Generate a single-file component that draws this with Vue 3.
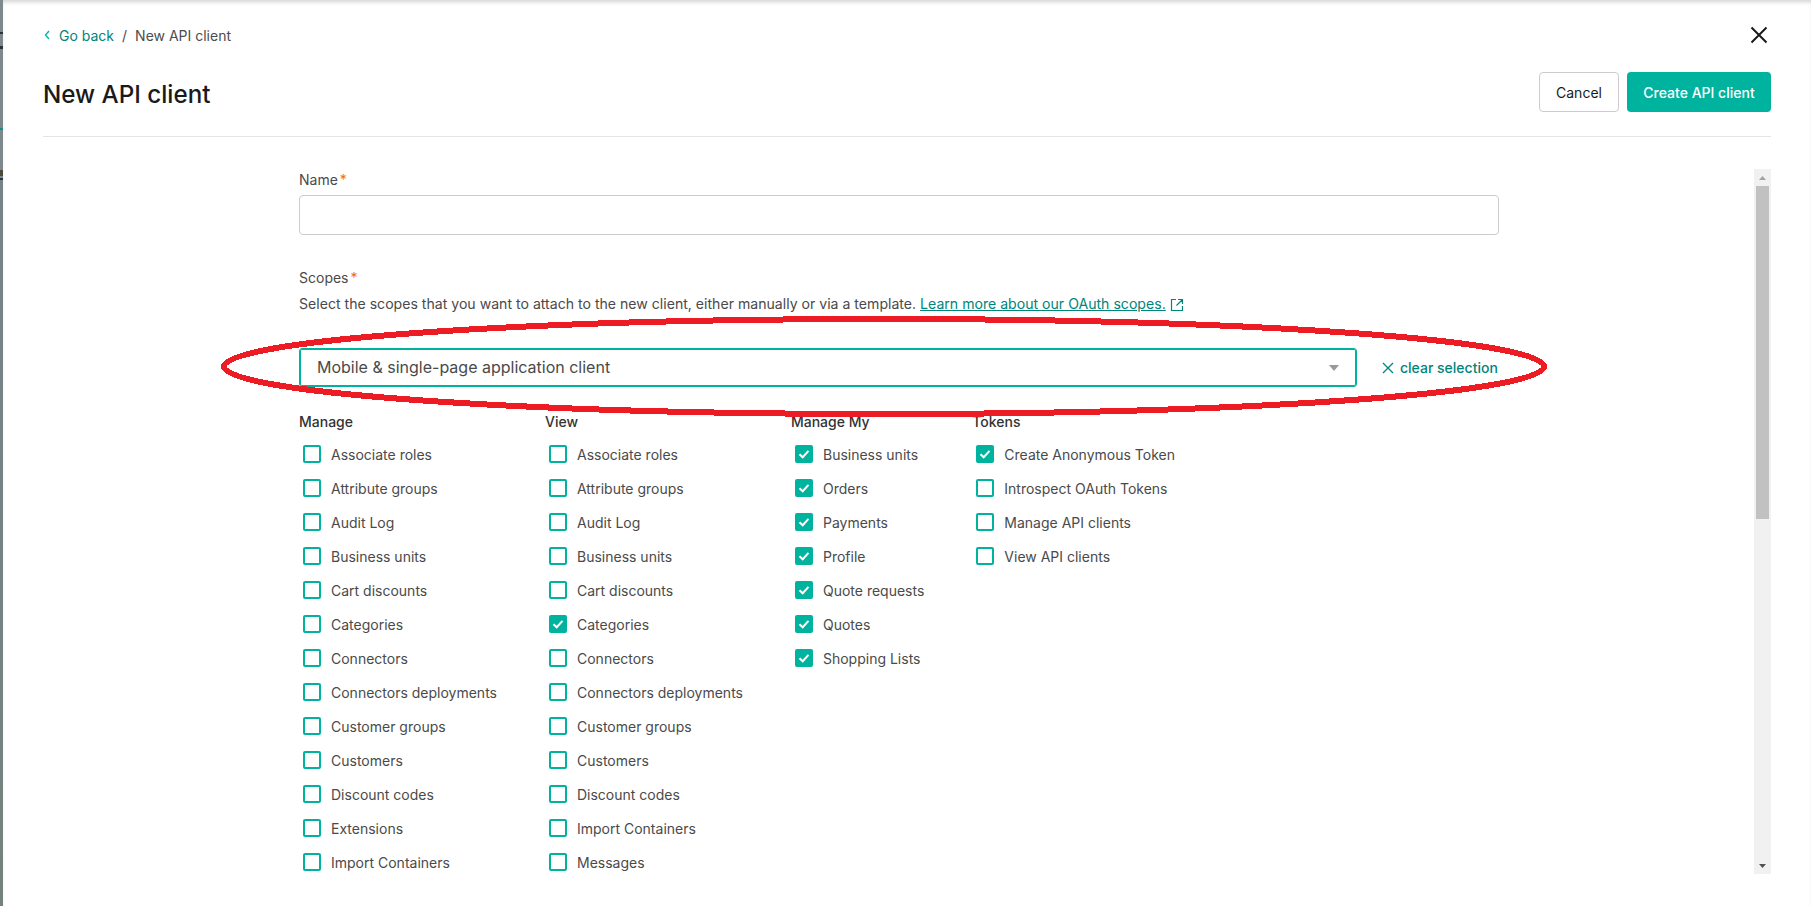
<script setup>
const manage = ['Associate roles', 'Attribute groups', 'Audit Log', 'Business units', 'Cart discounts', 'Categories', 'Connectors', 'Connectors deployments', 'Customer groups', 'Customers', 'Discount codes', 'Extensions', 'Import Containers']
const view = ['Associate roles', 'Attribute groups', 'Audit Log', 'Business units', 'Cart discounts', 'Categories', 'Connectors', 'Connectors deployments', 'Customer groups', 'Customers', 'Discount codes', 'Import Containers', 'Messages']
const manageMy = ['Business units', 'Orders', 'Payments', 'Profile', 'Quote requests', 'Quotes', 'Shopping Lists']
const tokens = ['Create Anonymous Token', 'Introspect OAuth Tokens', 'Manage API clients', 'View API clients']

const groups = [
  { title: 'Manage', items: manage, checked: [] },
  { title: 'View', items: view, checked: ['Categories'] },
  { title: 'Manage My', items: manageMy, checked: manageMy },
  { title: 'Tokens', items: tokens, checked: ['Create Anonymous Token'] },
]
</script>

<template>
  <div class="page">
    <div class="modal">
      <div class="crumbs">
        <a class="back">
          <svg width="8" height="12" viewBox="0 0 8 12"><path d="M6 2 2.5 6 6 10" fill="none" stroke="#00b39e" stroke-width="1.3"/></svg>
          Go back
        </a>
        <span class="slash">/</span>
        <span>New API client</span>
        <svg class="close" width="18" height="18" viewBox="0 0 18 18"><path d="M1.5 1.5 16.5 16.5M16.5 1.5 1.5 16.5" stroke="#1a1a1a" stroke-width="2" fill="none"/></svg>
      </div>
      <div class="head">
        <h1>New API client</h1>
        <div class="actions">
          <button class="btn cancel">Cancel</button>
          <button class="btn primary">Create API client</button>
        </div>
      </div>
      <div class="body">
        <div class="scroller">
          <div class="form">
            <div class="label">Name<span class="req">*</span></div>
            <div class="input"></div>

            <div class="label scopes">Scopes<span class="req">*</span></div>
            <p class="help">
              Select the scopes that you want to attach to the new client, either manually or via a template.
              <a class="link">Learn more about our OAuth scopes.</a>
              <svg class="ext" width="14" height="14" viewBox="0 0 14 14"><path d="M6 1.5H1.5v11h11V8M8 1.5h4.5V6M12.5 1.5 6.5 7.5" fill="none" stroke="#00857a" stroke-width="1.2"/></svg>
            </p>

            <div class="select-row">
              <div class="select">
                <span class="value">Mobile &amp; single-page application client</span>
                <i class="caret"></i>
              </div>
              <a class="clear">
                <svg width="14" height="14" viewBox="0 0 14 14"><path d="M2 2 12 12M12 2 2 12" stroke="#00857a" stroke-width="1.3" fill="none"/></svg>
                clear selection
              </a>
            </div>

            <div class="groups">
              <div v-for="g in groups" :key="g.title" class="group">
                <div class="group-title">{{ g.title }}</div>
                <label v-for="item in g.items" :key="item" class="row">
                  <span class="box" :class="{ on: g.checked.includes(item) }">
                    <svg v-if="g.checked.includes(item)" width="14" height="14" viewBox="0 0 14 14"><path d="M2.5 7.2 5.7 10.2 11.5 3.8" fill="none" stroke="#fff" stroke-width="2"/></svg>
                  </span>
                  {{ item }}
                </label>
              </div>
            </div>
          </div>
        </div>
        <div class="scrollbar">
          <div class="arrow"><svg width="7" height="4" viewBox="0 0 7 4"><path d="M3.5 0 7 4H0z" fill="#a3a3a3"/></svg></div>
          <div class="thumb"></div>
          <div class="arrow end"><svg width="7" height="4" viewBox="0 0 7 4"><path d="M0 0H7L3.5 4z" fill="#505050"/></svg></div>
        </div>
      </div>
    </div>
    <svg class="ring" width="1811" height="906" viewBox="0 0 1811 906">
      <ellipse cx="884" cy="366.5" rx="660" ry="47.5" fill="none" stroke="#ed1c24" stroke-width="6" shape-rendering="crispEdges"/>
    </svg>
  </div>
</template>

<style>
html, body { margin: 0; overflow: hidden; background: #fff; }
</style>

<style scoped>
.page {
  position: relative;
  width: 1811px;
  height: 906px;
  overflow: hidden;
  /* bits of the page behind the modal showing at the left edge */
  background: linear-gradient(
    to bottom,
    #7d898c 32px, #2b3336 32px, #2b3336 34px,
    #7d898c 34px, #7d898c 46px, #2b3336 46px, #2b3336 49px,
    #7d898c 49px, #7d898c 128px, #0f8f86 128px, #0f8f86 130px,
    #7d898c 130px, #7d898c 170px, #4b4a3c 170px, #4b4a3c 176px,
    #7d898c 176px, #7d898c 178px, #2b3336 178px, #2b3336 180px,
    #76838a 180px, #74827f 906px
  );
  font-family: Inter, "Liberation Sans", sans-serif;
  color: #4a4a4a;
}

.modal {
  box-sizing: border-box;
  margin-left: 3px;
  height: 906px;
  padding: 0 40px;
  background: #fff;
  box-shadow: inset 0 4px 4px -2px rgba(0, 0, 0, 0.18);
}

.crumbs {
  position: relative;
  display: flex;
  align-items: center;
  height: 70px;
  font-size: 14px;
  gap: 7px;
  color: #4d4d4d;
}

.back {
  color: #00857a;
  display: flex;
  align-items: center;
  gap: 8px;
}

.slash {
  margin: 0 1px;
}

.close {
  position: absolute;
  right: 3px;
  top: 26px;
}

.head {
  display: flex;
  justify-content: space-between;
  height: 66px;
  border-bottom: 1px solid #e5e5e5;
}

.head h1 {
  margin: 7px 0 0;
  font-size: 24.2px;
  line-height: 36px;
  font-weight: 500;
  color: #1a1a1a;
}

.actions {
  display: flex;
  gap: 8px;
  margin-top: 2px;
  height: 40px;
}

.btn {
  height: 40px;
  border-radius: 4px;
  font-family: inherit;
  font-size: 14px;
  padding: 0;
}

.cancel {
  width: 80px;
  background: #fff;
  color: #1a1a1a;
  border: 1px solid #cccccc;
}

.primary {
  width: 144px;
  background: #00b39e;
  color: #fff;
  border: 0;
  font-weight: 500;
}

.body {
  display: flex;
  height: 705px;
  margin-top: 32px;
}

.scroller {
  flex: 1;
  overflow: hidden;
  padding-left: 256px;
}

.scrollbar {
  width: 17px;
  display: flex;
  flex-direction: column;
  background: #f1f1f1;
}

.arrow {
  height: 17px;
  display: flex;
  align-items: center;
  justify-content: center;
}

.arrow.end {
  margin-top: auto;
}

.thumb {
  height: 333px;
  margin: 0 2px;
  background: #c1c1c1;
}

.form {
  width: 1200px;
  font-size: 14px;
}

.label {
  line-height: 22px;
  color: #4a4a4a;
  font-size: 14px;
}

.req {
  color: #f16d0e;
  margin-left: 2px;
}

.input {
  height: 38px;
  margin-top: 4px;
  border: 1px solid #ccc;
  border-radius: 4px;
}

.scopes {
  margin-top: 32px;
}

.help {
  margin: 4px 0 0;
  font-size: 14.1px;
  line-height: 22px;
  color: #4a4a4a;
}

.link {
  color: #00857a;
  text-decoration: underline;
}

.ext {
  margin-left: 4px;
  vertical-align: -3px;
}

.select-row {
  display: flex;
  align-items: center;
  margin-top: 33px;
}

.select {
  box-sizing: border-box;
  width: 1058px;
  height: 39px;
  padding: 0 17px;
  display: flex;
  align-items: center;
  justify-content: space-between;
  border: 1px solid #00b39e;
  border-radius: 3px;
  box-shadow: inset 0 0 0 1px #00b39e;
  font-size: 16px;
}

.value {
  margin-top: -2px;
}

.caret {
  width: 0;
  height: 0;
  border-left: 5px solid transparent;
  border-right: 5px solid transparent;
  border-top: 6px solid #999;
}

.clear {
  margin-left: 24px;
  display: flex;
  align-items: center;
  gap: 5px;
  color: #00857a;
  font-size: 14px;
  font-weight: 500;
}

.groups {
  display: flex;
  gap: 48px;
  margin-top: 25px;
}

.group-title {
  line-height: 20px;
  margin-bottom: 5px;
  font-size: 14px;
  font-weight: 500;
  color: #333;
}

.row {
  display: flex;
  align-items: center;
  gap: 10px;
  height: 34px;
  padding-left: 4px;
  font-size: 14px;
  white-space: nowrap;
}

.box {
  box-sizing: border-box;
  width: 18px;
  height: 18px;
  display: flex;
  align-items: center;
  justify-content: center;
  border: 2px solid #00b39e;
  border-radius: 2px;
}

.box.on {
  background: #00b39e;
}

.ring {
  position: absolute;
  left: 0;
  top: 0;
  pointer-events: none;
}
</style>
